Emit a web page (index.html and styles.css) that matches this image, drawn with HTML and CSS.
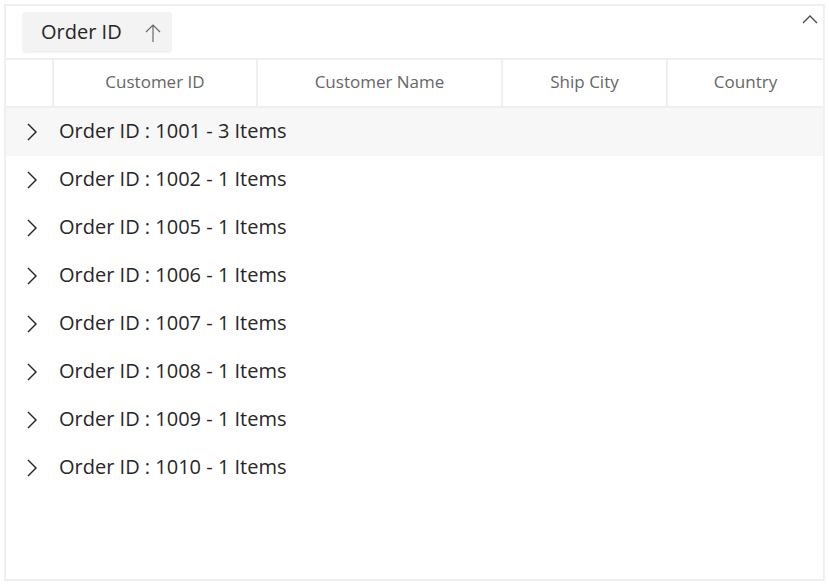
FILE: index.html
```html
<!DOCTYPE html>
<html lang="en">
<head>
    <meta charset="UTF-8">
    <title>Orders Grid</title>
    <link rel="stylesheet" href="styles.css">
</head>
<body>
    <div class="grid">
        <div class="group-panel">
            <div class="group-chip">
                <span>Order ID</span>
                <svg class="sort-icon" width="20" height="20" viewBox="0 0 20 20">
                    <path d="M10 2 V19 M3 9 L10 2 L17 9" fill="none" stroke="#6b6b6b" stroke-width="1.2"/>
                </svg>
            </div>
            <svg class="collapse-icon" width="18" height="12" viewBox="0 0 18 12">
                <path d="M2 9 L9 2 L16 9" fill="none" stroke="#4a4a4a" stroke-width="1.3"/>
            </svg>
        </div>

        <div class="header-row">
            <div class="header-cell"></div>
            <div class="header-cell">Customer ID</div>
            <div class="header-cell">Customer Name</div>
            <div class="header-cell">Ship City</div>
            <div class="header-cell last">Country</div>
        </div>

        <div class="rows">
            <div class="group-row active">
                <svg class="chevron" width="12" height="18" viewBox="0 0 12 18"><path d="M2 1 L10 9 L2 17" fill="none" stroke="#1f1f1f" stroke-width="1.4"/></svg>
                <span>Order ID : 1001 - 3 Items</span>
            </div>
            <div class="group-row">
                <svg class="chevron" width="12" height="18" viewBox="0 0 12 18"><path d="M2 1 L10 9 L2 17" fill="none" stroke="#1f1f1f" stroke-width="1.4"/></svg>
                <span>Order ID : 1002 - 1 Items</span>
            </div>
            <div class="group-row">
                <svg class="chevron" width="12" height="18" viewBox="0 0 12 18"><path d="M2 1 L10 9 L2 17" fill="none" stroke="#1f1f1f" stroke-width="1.4"/></svg>
                <span>Order ID : 1005 - 1 Items</span>
            </div>
            <div class="group-row">
                <svg class="chevron" width="12" height="18" viewBox="0 0 12 18"><path d="M2 1 L10 9 L2 17" fill="none" stroke="#1f1f1f" stroke-width="1.4"/></svg>
                <span>Order ID : 1006 - 1 Items</span>
            </div>
            <div class="group-row">
                <svg class="chevron" width="12" height="18" viewBox="0 0 12 18"><path d="M2 1 L10 9 L2 17" fill="none" stroke="#1f1f1f" stroke-width="1.4"/></svg>
                <span>Order ID : 1007 - 1 Items</span>
            </div>
            <div class="group-row">
                <svg class="chevron" width="12" height="18" viewBox="0 0 12 18"><path d="M2 1 L10 9 L2 17" fill="none" stroke="#1f1f1f" stroke-width="1.4"/></svg>
                <span>Order ID : 1008 - 1 Items</span>
            </div>
            <div class="group-row">
                <svg class="chevron" width="12" height="18" viewBox="0 0 12 18"><path d="M2 1 L10 9 L2 17" fill="none" stroke="#1f1f1f" stroke-width="1.4"/></svg>
                <span>Order ID : 1009 - 1 Items</span>
            </div>
            <div class="group-row">
                <svg class="chevron" width="12" height="18" viewBox="0 0 12 18"><path d="M2 1 L10 9 L2 17" fill="none" stroke="#1f1f1f" stroke-width="1.4"/></svg>
                <span>Order ID : 1010 - 1 Items</span>
            </div>
        </div>
    </div>
</body>
</html>
```

FILE: styles.css
```css
body {
    margin: 0;
    padding: 0;
    background: #ffffff;
    font-family: 'Open Sans', 'Noto Sans', sans-serif;
    color: #1b1b1b;
}

.grid {
    box-sizing: border-box;
    margin: 4px 0 0 4px;
    width: 821px;
    height: 577px;
    border: 2px solid #efefef;
    display: flex;
    flex-direction: column;
}

.group-panel {
    position: relative;
    height: 54px;
    padding: 6px 0 0 16px;
    box-sizing: border-box;
    border-bottom: 2px solid #efefef;
}

.group-chip {
    display: inline-flex;
    align-items: center;
    height: 41px;
    width: 150px;
    box-sizing: border-box;
    padding: 0 0 0 19px;
    background: #f3f3f3;
    border-radius: 4px;
    font-size: 20px;
    color: #262626;
}

.group-chip span {
    width: 102px;
    margin-bottom: 2px;
}

.sort-icon {
    display: block;
}

.collapse-icon {
    position: absolute;
    top: 8px;
    right: 4px;
}

.header-row {
    display: grid;
    grid-template-columns: 48px 204px 245px 165px 1fr;
    height: 48px;
    box-sizing: border-box;
    border-bottom: 2px solid #efefef;
}

.header-cell {
    display: flex;
    align-items: center;
    justify-content: center;
    padding-bottom: 4px;
    border-right: 2px solid #efefef;
    font-size: 17px;
    color: #666666;
}

.header-cell.last {
    border-right: none;
}

.group-row {
    display: flex;
    align-items: center;
    height: 48px;
    font-size: 20px;
    color: #262626;
}

.group-row span {
    margin-bottom: 4px;
}

.group-row.active {
    background: #f7f7f7;
}

.chevron {
    margin: 0 21px 0 20px;
}
```
